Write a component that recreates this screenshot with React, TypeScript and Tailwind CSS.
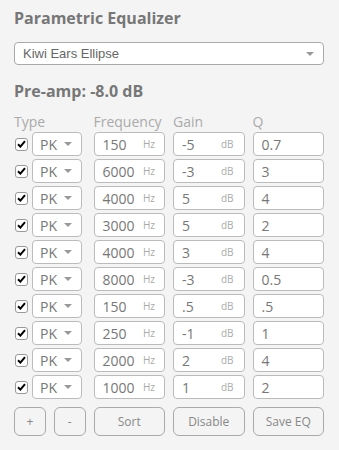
import React from "react";

const rows = [
  { f: "150", g: "-5", q: "0.7" },
  { f: "6000", g: "-3", q: "3" },
  { f: "4000", g: "5", q: "4" },
  { f: "3000", g: "5", q: "2" },
  { f: "4000", g: "3", q: "4" },
  { f: "8000", g: "-3", q: "0.5" },
  { f: "150", g: ".5", q: ".5" },
  { f: "250", g: "-1", q: "1" },
  { f: "2000", g: "2", q: "4" },
  { f: "1000", g: "1", q: "2" },
];

function Caret({ className }: { className?: string }) {
  return (
    <svg width="8" height="4" viewBox="0 0 8 4" className={className}>
      <path d="M0 0 L8 0 L4 4 Z" fill="#999" />
    </svg>
  );
}

function Check() {
  return (
    <div className="ml-[1px] flex h-[13px] w-[13px] items-center justify-center rounded-[3px] border border-[#999] bg-white">
      <svg width="9" height="8" viewBox="0 0 9 8">
        <path d="M1 4.2 L3.4 6.6 L8 1.2" stroke="#000" strokeWidth="2" fill="none" strokeLinejoin="miter" />
      </svg>
    </div>
  );
}

export default function App() {
  return (
    <div
      className="h-[450px] w-[339px] bg-[#f4f4f4] px-[14px] pt-[6px]"
      style={{ fontFamily: "'Open Sans', sans-serif" }}
    >
      <div className="text-[16px] font-bold leading-[24px] text-[#777]">Parametric Equalizer</div>
      <div
        className="mt-[12px] flex h-[23px] w-[310px] items-center justify-between rounded-[4px] border border-[#aaa] bg-white pl-[8px] pr-[9px] text-[13px] text-[#666]"
        style={{ fontFamily: "'Liberation Sans', Arial, sans-serif" }}
      >
        <span>Kiwi Ears Ellipse</span>
        <Caret />
      </div>
      <div className="mt-[15px] text-[16px] font-bold leading-[22px] text-[#777]">Pre-amp: -8.0 dB</div>
      <div className="mt-[11px] grid w-[310px] grid-cols-4 gap-x-[8px] text-[14px] leading-[17px] text-[#aaa]">
        <div>Type</div>
        <div>Frequency</div>
        <div>Gain</div>
        <div>Q</div>
      </div>
      <div className="mt-[2px] flex w-[310px] flex-col gap-[3px]">
        {rows.map((r, i) => (
          <div key={i} className="grid h-[24px] grid-cols-4 gap-x-[8px] text-[14px] text-[#777]">
            <div className="flex items-center gap-[4px]">
              <Check />
              <div className="flex h-[24px] w-[50px] items-center justify-between rounded-[4px] border border-[#bbb] bg-white pl-[7px] pr-[9px]">
                <span>PK</span>
                <Caret />
              </div>
            </div>
            <div className="flex items-center justify-between rounded-[4px] border border-[#bbb] bg-white pl-[8px] pr-[9px]">
              <span>{r.f}</span>
              <span className="text-[10px] text-[#aaa]">Hz</span>
            </div>
            <div className="flex items-center justify-between rounded-[4px] border border-[#bbb] bg-white pl-[8px] pr-[10px]">
              <span>{r.g}</span>
              <span className="text-[10px] text-[#aaa]">dB</span>
            </div>
            <div className="flex items-center rounded-[4px] border border-[#bbb] bg-white pl-[8px]">
              <span>{r.q}</span>
            </div>
          </div>
        ))}
      </div>
      <div className="mt-[8px] grid w-[310px] grid-cols-4 gap-x-[8px] text-[12px] text-[#888]">
        <div className="flex gap-[8px]">
          <button className="flex h-[29px] w-[32px] items-center justify-center rounded-[6px] border border-[#aaa]">+</button>
          <button className="flex h-[29px] w-[32px] items-center justify-center rounded-[6px] border border-[#aaa]">-</button>
        </div>
        <button className="flex h-[29px] items-center justify-center rounded-[6px] border border-[#aaa]">Sort</button>
        <button className="flex h-[29px] items-center justify-center rounded-[6px] border border-[#aaa]">Disable</button>
        <button className="flex h-[29px] items-center justify-center rounded-[6px] border border-[#aaa]">Save EQ</button>
      </div>
    </div>
  );
}
